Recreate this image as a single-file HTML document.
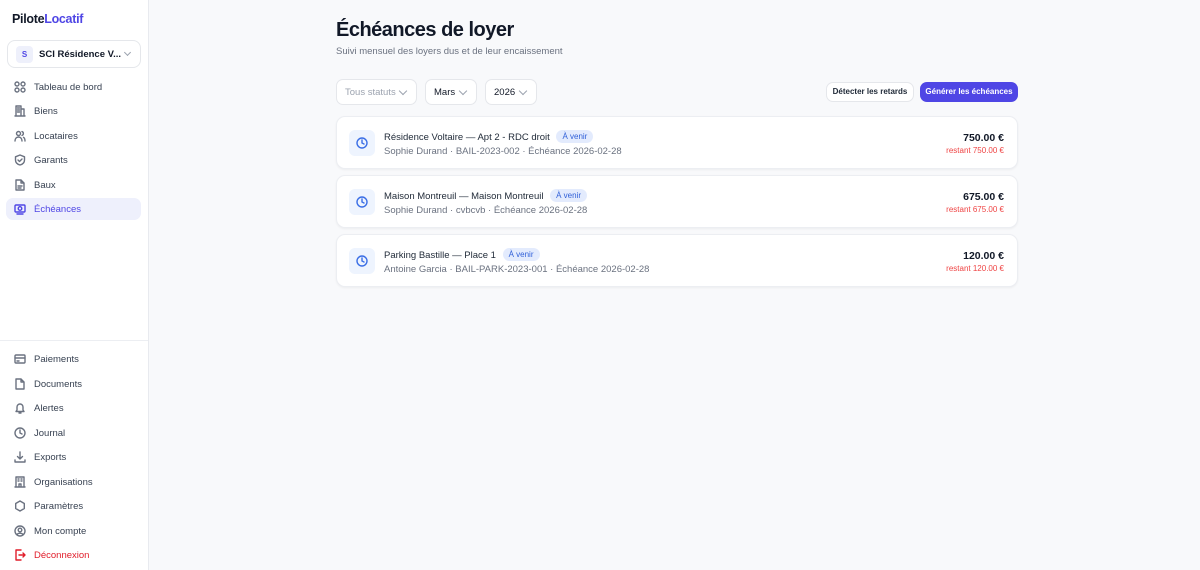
<!DOCTYPE html>
<html><head><meta charset="utf-8"><style>
*{box-sizing:border-box;margin:0;padding:0}
body{width:1200px;height:570px;overflow:hidden;background:#f8f9fb;font-family:"Liberation Sans",Arial,sans-serif;position:relative;color:#111827}
.sb{position:absolute;left:0;top:0;width:149px;height:570px;background:#fff;border-right:1px solid #e8eaef}
.logo{position:absolute;left:12px;top:12px;font-size:12.5px;font-weight:700;letter-spacing:-0.3px}
.logo span{color:#4f46e5}
.org{position:absolute;left:7px;top:40px;width:134px;height:28px;border:1px solid #e5e7eb;border-radius:8px;font-size:9.5px;font-weight:700}
.org .s{position:absolute;left:8px;top:5px;width:17px;height:17px;background:#eef0fb;border-radius:4px;color:#4f46e5;font-size:8px;text-align:center;line-height:17px}
.org .t{position:absolute;left:31px;top:8px}
.nav{position:absolute;left:6px;width:135px;height:22px;font-size:9.5px;color:#374151;border-radius:7px}
.nav svg{position:absolute;left:8px;top:5px;width:12px;height:12px;fill:none;stroke:#6b7280;stroke-width:1.4;stroke-linecap:round;stroke-linejoin:round}
.nav span{position:absolute;left:28px;top:6px}
.nav.act{background:#eef0fc;color:#4f46e5}
.nav.act svg{stroke:#4f46e5}
.nav.red{color:#e11d2a}.nav.red svg{stroke:#e11d2a}
.hr{position:absolute;left:0;top:340px;width:148px;border-top:1px solid #eceef2}
h1{position:absolute;left:336px;top:19px;font-size:20px;font-weight:700;letter-spacing:-0.5px}
.sub{position:absolute;left:336px;top:46px;font-size:9.5px;color:#6b7280}
.sel{position:absolute;top:79px;height:26px;background:#fff;border:1px solid #e5e7eb;border-radius:7px;font-size:9.5px;padding:7px 0 0 8px}
.sel:after{content:"";position:absolute;right:10px;top:8px;width:5px;height:5px;border-right:1px solid #9ca3af;border-bottom:1px solid #9ca3af;transform:rotate(45deg)}
.btn{position:absolute;top:82px;height:20px;border-radius:7px;font-size:8px;font-weight:700;text-align:center;line-height:20px}
.card{position:absolute;left:336px;width:682px;height:53px;background:#fff;border:1px solid #eceef2;border-radius:9px;box-shadow:0 1px 2px rgba(0,0,0,.05)}
.ic{position:absolute;left:12px;top:13px;width:26px;height:26px;background:#eef4fe;border-radius:6px}
.ic svg{position:absolute;left:7px;top:7px;width:12px;height:12px;fill:none;stroke:#3b6fe6;stroke-width:1.4;stroke-linecap:round}
.tt{position:absolute;left:47px;top:13px;font-size:9.5px;color:#1f2937}
.bd{display:inline-block;margin-left:4px;background:#e3ebfd;color:#2f5fd8;font-size:8px;padding:2px 6px;border-radius:7px;vertical-align:1px}
.ss{position:absolute;left:47px;top:29px;font-size:9.5px;color:#6b7280}
.am{position:absolute;right:13px;top:15px;font-size:10.5px;font-weight:700}
.rs{position:absolute;right:13px;top:29px;font-size:8px;color:#ef4444}
</style></head><body>
<div class="sb">
<div class="logo">Pilote<span>Locatif</span></div>
<div class="org"><div class="s">S</div><div class="t">SCI Résidence V...</div><div style="position:absolute;right:10px;top:9px;width:5px;height:5px;border-right:1px solid #9ca3af;border-bottom:1px solid #9ca3af;transform:rotate(45deg)"></div></div>
<div class="nav" style="top:76px"><svg viewBox="0 0 12 12"><circle cx="3" cy="3" r="2"/><circle cx="9" cy="3" r="2"/><circle cx="3" cy="9" r="2"/><circle cx="9" cy="9" r="2"/></svg><span>Tableau de bord</span></div>
<div class="nav" style="top:100px"><svg viewBox="0 0 12 12"><path d="M1 11h10M2 11V1h5v10M7 4h3v7M3.5 3h2M3.5 5h2M3.5 7h2"/></svg><span>Biens</span></div>
<div class="nav" style="top:125px"><svg viewBox="0 0 12 12"><circle cx="4.5" cy="3.5" r="2"/><path d="M1 11c0-2.5 1.5-4 3.5-4s3.5 1.5 3.5 4M8 1.6a2 2 0 010 3.8M9.5 7.3c1 .6 1.5 2 1.5 3.7"/></svg><span>Locataires</span></div>
<div class="nav" style="top:149px"><svg viewBox="0 0 12 12"><path d="M6 1l4.5 1.8V6c0 3-2.5 4.5-4.5 5-2-.5-4.5-2-4.5-5V2.8z"/><path d="M4 6l1.5 1.5L8 5"/></svg><span>Garants</span></div>
<div class="nav" style="top:174px"><svg viewBox="0 0 12 12"><path d="M2 1h5l3 3v7H2zM7 1v3h3M4 7h4M4 9h3"/></svg><span>Baux</span></div>
<div class="nav act" style="top:198px"><svg viewBox="0 0 12 12"><rect x="1" y="2" width="10" height="7" rx="1"/><circle cx="6" cy="5.5" r="1.8"/><path d="M3 11h6"/></svg><span>Échéances</span></div>
<div class="hr"></div>
<div class="nav" style="top:348px"><svg viewBox="0 0 12 12"><rect x="1" y="2" width="10" height="8" rx="1"/><path d="M1 5h10M3 8h2"/></svg><span>Paiements</span></div>
<div class="nav" style="top:373px"><svg viewBox="0 0 12 12"><path d="M2 1h5l3 3v7H2zM7 1v3h3"/></svg><span>Documents</span></div>
<div class="nav" style="top:397px"><svg viewBox="0 0 12 12"><path d="M3 8V5a3 3 0 016 0v3l1 1.5H2zM5 11h2"/></svg><span>Alertes</span></div>
<div class="nav" style="top:422px"><svg viewBox="0 0 12 12"><circle cx="6" cy="6" r="5"/><path d="M6 3v3l2 1"/></svg><span>Journal</span></div>
<div class="nav" style="top:446px"><svg viewBox="0 0 12 12"><path d="M6 1v7M3.5 5.5L6 8l2.5-2.5M1 9v2h10V9"/></svg><span>Exports</span></div>
<div class="nav" style="top:471px"><svg viewBox="0 0 12 12"><path d="M2 11V1h8v10zM1 11h10M4 3h1M7 3h1M4 5h1M7 5h1M5 11V8h2v3"/></svg><span>Organisations</span></div>
<div class="nav" style="top:495px"><svg viewBox="0 0 12 12"><path d="M6 1l4.3 2.5v5L6 11 1.7 8.5v-5z"/></svg><span>Paramètres</span></div>
<div class="nav" style="top:520px"><svg viewBox="0 0 12 12"><circle cx="6" cy="6" r="5"/><circle cx="6" cy="5" r="1.8"/><path d="M3 9.5c1.5-1.8 4.5-1.8 6 0"/></svg><span>Mon compte</span></div>
<div class="nav red" style="top:544px"><svg viewBox="0 0 12 12"><path d="M7 1H2v10h5M5 6h6M9 4l2 2-2 2"/></svg><span>Déconnexion</span></div>
</div>
<h1>Échéances de loyer</h1>
<div class="sub">Suivi mensuel des loyers dus et de leur encaissement</div>
<div class="sel" style="left:336px;width:81px;color:#9ca3af">Tous statuts</div>
<div class="sel" style="left:425px;width:52px">Mars</div>
<div class="sel" style="left:485px;width:52px">2026</div>
<div class="btn" style="left:826px;width:88px;background:#fff;border:1px solid #e5e7eb;color:#1f2937;line-height:18px">Détecter les retards</div>
<div class="btn" style="left:920px;width:98px;background:#4f46e5;color:#fff">Générer les échéances</div>

<div class="card" style="top:116px"><div class="ic"><svg viewBox="0 0 12 12"><circle cx="6" cy="6" r="5"/><path d="M6 3v3l2 1"/></svg></div>
<div class="tt">Résidence Voltaire — Apt 2 - RDC droit <span class="bd">À venir</span></div>
<div class="ss">Sophie Durand · BAIL-2023-002 · Échéance 2026-02-28</div>
<div class="am">750.00 €</div><div class="rs">restant 750.00 €</div></div>

<div class="card" style="top:175px"><div class="ic"><svg viewBox="0 0 12 12"><circle cx="6" cy="6" r="5"/><path d="M6 3v3l2 1"/></svg></div>
<div class="tt">Maison Montreuil — Maison Montreuil <span class="bd">À venir</span></div>
<div class="ss">Sophie Durand · cvbcvb · Échéance 2026-02-28</div>
<div class="am">675.00 €</div><div class="rs">restant 675.00 €</div></div>

<div class="card" style="top:234px"><div class="ic"><svg viewBox="0 0 12 12"><circle cx="6" cy="6" r="5"/><path d="M6 3v3l2 1"/></svg></div>
<div class="tt">Parking Bastille — Place 1 <span class="bd">À venir</span></div>
<div class="ss">Antoine Garcia · BAIL-PARK-2023-001 · Échéance 2026-02-28</div>
<div class="am">120.00 €</div><div class="rs">restant 120.00 €</div></div>
</body></html>
